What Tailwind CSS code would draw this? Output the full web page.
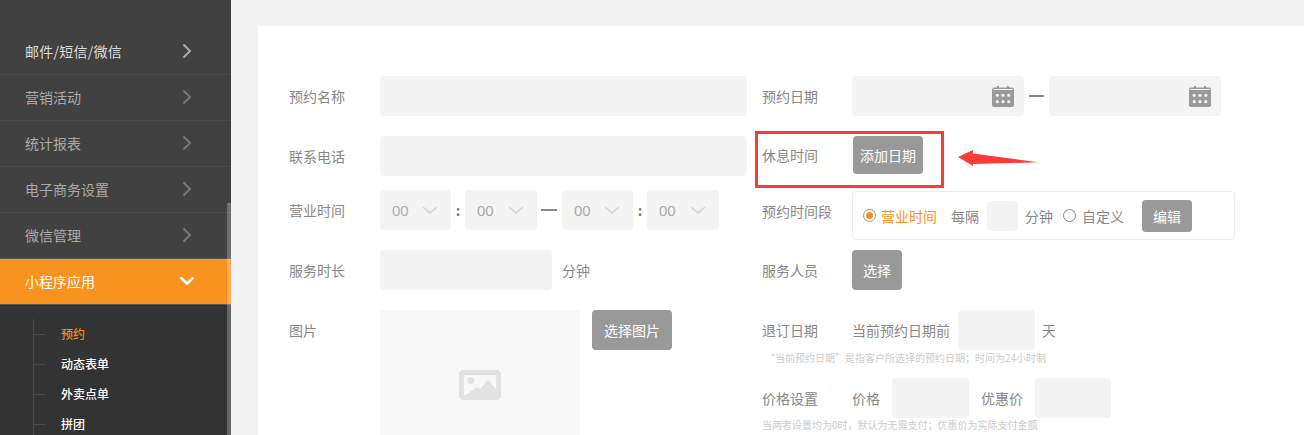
<!DOCTYPE html>
<html lang="en">
<head>
  <meta charset="UTF-8" />
  <title>预约</title>
  <script src="https://cdn.jsdelivr.net/npm/@tailwindcss/browser@4"></script>
</head>
<body class="h-[435px] w-[1304px] overflow-hidden bg-[#f2f2f2] font-['Noto_Sans_CJK_SC','Liberation_Sans',sans-serif] text-sm text-[#888]">
  <div class="relative flex h-[435px] overflow-hidden">

    <!-- sidebar -->
    <aside class="relative h-full w-[231px] shrink-0 overflow-hidden bg-[#414141] pt-[29px]">
      <div class="flex h-[46px] items-center justify-between border-b border-[#4b4b4b] pb-0.5 pl-[25px] pr-[39px] text-[#ddd]">
        <span class="tracking-[0.25px]">邮件/短信/微信</span>
        <svg width="10" height="16" viewBox="0 0 10 16" fill="none" stroke="#aaa" stroke-width="2"><path d="M1.5 1.5 8 8l-6.500 6.500" /></svg>
      </div>
      <div class="flex h-[46px] items-center justify-between border-b border-[#4b4b4b] pb-0.5 pl-[25px] pr-[39px] text-[#aaa]">
        <span>营销活动</span>
        <svg width="10" height="16" viewBox="0 0 10 16" fill="none" stroke="#777" stroke-width="2"><path d="M1.5 1.5 8 8l-6.500 6.500" /></svg>
      </div>
      <div class="flex h-[46px] items-center justify-between border-b border-[#4b4b4b] pb-0.5 pl-[25px] pr-[39px] text-[#aaa]">
        <span>统计报表</span>
        <svg width="10" height="16" viewBox="0 0 10 16" fill="none" stroke="#777" stroke-width="2"><path d="M1.5 1.5 8 8l-6.500 6.500" /></svg>
      </div>
      <div class="flex h-[46px] items-center justify-between border-b border-[#4b4b4b] pb-0.5 pl-[25px] pr-[39px] text-[#aaa]">
        <span>电子商务设置</span>
        <svg width="10" height="16" viewBox="0 0 10 16" fill="none" stroke="#777" stroke-width="2"><path d="M1.5 1.5 8 8l-6.500 6.500" /></svg>
      </div>
      <div class="flex h-[46px] items-center justify-between border-b border-[#555] pb-0.5 pl-[25px] pr-[39px] text-[#aaa]">
        <span>微信管理</span>
        <svg width="10" height="16" viewBox="0 0 10 16" fill="none" stroke="#777" stroke-width="2"><path d="M1.5 1.5 8 8l-6.500 6.500" /></svg>
      </div>
      <div class="flex h-[46px] items-center justify-between border-b border-[#555] bg-[#f9931f] pb-0.5 pl-[25px] pr-[36px] text-white">
        <span>小程序应用</span>
        <svg width="16" height="10" viewBox="0 0 16 10" fill="none" stroke="#fff" stroke-width="2.500"><path d="M1.500 1.500 8 7.500l6.500-6" /></svg>
      </div>
      <div class="relative h-[130px] bg-[#333] pl-[61px] pt-[14px] text-xs font-medium text-white">
        <div class="absolute bottom-0 left-[33px] top-[14px] w-px bg-[#4a4a4a]"></div>
        <div class="relative flex h-[30px] items-center text-[#e88a22]"><i class="absolute left-[-28px] h-px w-3 bg-[#4a4a4a]"></i>预约</div>
        <div class="relative flex h-[30px] items-center"><i class="absolute left-[-28px] h-px w-3 bg-[#4a4a4a]"></i>动态表单</div>
        <div class="relative flex h-[30px] items-center"><i class="absolute left-[-28px] h-px w-3 bg-[#4a4a4a]"></i>外卖点单</div>
        <div class="relative flex h-[30px] items-center"><i class="absolute left-[-28px] h-px w-3 bg-[#4a4a4a]"></i>拼团</div>
      </div>
      <!-- scrollbar -->
      <div class="absolute bottom-0 right-0 top-[203px] w-1 bg-white/25"></div>
    </aside>

    <!-- card -->
    <main class="ml-[27px] mt-[26px] flex flex-1 bg-white pl-[31px] pt-[50px]">

      <!-- left column -->
      <div class="w-[473px] shrink-0">
        <div class="flex h-10 items-center">
          <label class="w-[91px]">预约名称</label>
          <div class="h-10 w-[367px] rounded bg-[#f4f4f4]"></div>
        </div>
        <div class="mt-5 flex h-10 items-center">
          <label class="w-[91px]">联系电话</label>
          <div class="h-10 w-[367px] rounded bg-[#f4f4f4]"></div>
        </div>
        <div class="mt-[14px] flex h-10 items-center">
          <label class="w-[91px]">营业时间</label>
          <div class="flex h-10 w-[71px] items-center rounded bg-[#f4f4f4] pl-3 font-['Liberation_Sans'] text-[15px] text-[#aaa]">
            <span class="w-[30px] pt-px">00</span>
            <svg width="16" height="8" viewBox="0 0 16 8" fill="none" stroke="#d4d4d4" stroke-width="1.500"><path d="M1 1l7 6 7-6" /></svg>
          </div>
          <span class="w-[14px] text-center font-bold text-[#777]">:</span>
          <div class="flex h-10 w-[72px] items-center rounded bg-[#f4f4f4] pl-3 font-['Liberation_Sans'] text-[15px] text-[#aaa]">
            <span class="w-[31px] pt-px">00</span>
            <svg width="16" height="8" viewBox="0 0 16 8" fill="none" stroke="#d4d4d4" stroke-width="1.500"><path d="M1 1l7 6 7-6" /></svg>
          </div>
          <div class="mx-1 h-0.5 w-4 bg-[#888]"></div>
          <div class="ml-px flex h-10 w-[71px] items-center rounded bg-[#f4f4f4] pl-3 font-['Liberation_Sans'] text-[15px] text-[#aaa]">
            <span class="w-[30px] pt-px">00</span>
            <svg width="16" height="8" viewBox="0 0 16 8" fill="none" stroke="#d4d4d4" stroke-width="1.500"><path d="M1 1l7 6 7-6" /></svg>
          </div>
          <span class="w-[14px] text-center font-bold text-[#777]">:</span>
          <div class="flex h-10 w-[72px] items-center rounded bg-[#f4f4f4] pl-3 font-['Liberation_Sans'] text-[15px] text-[#aaa]">
            <span class="w-[31px] pt-px">00</span>
            <svg width="16" height="8" viewBox="0 0 16 8" fill="none" stroke="#d4d4d4" stroke-width="1.500"><path d="M1 1l7 6 7-6" /></svg>
          </div>
        </div>
        <div class="mt-5 flex h-10 items-center">
          <label class="w-[91px]">服务时长</label>
          <div class="h-10 w-[172px] rounded bg-[#f4f4f4]"></div>
          <span class="ml-2.5">分钟</span>
        </div>
        <div class="mt-5 flex items-start">
          <label class="w-[91px] pt-[10px]">图片</label>
          <div class="flex h-[125px] w-[200px] justify-center bg-[#f8f8f8] pt-[60px]">
            <svg width="42" height="30" viewBox="0 0 42 30">
              <rect x="2.500" y="2.500" width="37" height="25" rx="2" fill="none" stroke="#e2e2e2" stroke-width="5" />
              <circle cx="12" cy="10.500" r="3.500" fill="#e2e2e2" />
              <path d="M5 26l13-9 3 2 8-9 8 9v7z" fill="#e2e2e2" />
            </svg>
          </div>
          <button class="ml-3 h-10 w-20 rounded bg-[#999] text-white">选择图片</button>
        </div>
      </div>

      <!-- right column -->
      <div class="flex-1">
        <div class="flex h-10 items-center">
          <label class="w-[90px]">预约日期</label>
          <div class="flex h-10 w-[172px] items-center justify-end rounded bg-[#f4f4f4] pr-[10px]">
            <svg width="22" height="21" viewBox="0 0 22 21">
              <path d="M2 1.500h3V0h2v1.500h8V0h2v1.500h3a2 2 0 0 1 2 2V19a2 2 0 0 1-2 2H2a2 2 0 0 1-2-2V3.500a2 2 0 0 1 2-2z" fill="#999" />
              <rect x="1.500" y="3" width="19" height="1" fill="#f4f4f4" />
              <g fill="#f4f4f4"><circle cx="5.300" cy="9.300" r="1.600" /><circle cx="11" cy="9.300" r="1.600" /><circle cx="16.700" cy="9.300" r="1.600" /><circle cx="5.300" cy="15.700" r="1.600" /><circle cx="11" cy="15.700" r="1.600" /><circle cx="16.700" cy="15.700" r="1.600" /></g>
            </svg>
          </div>
          <div class="mx-[5px] h-0.5 w-[15px] bg-[#888]"></div>
          <div class="flex h-10 w-[172px] items-center justify-end rounded bg-[#f4f4f4] pr-[10px]">
            <svg width="22" height="21" viewBox="0 0 22 21">
              <path d="M2 1.500h3V0h2v1.500h8V0h2v1.500h3a2 2 0 0 1 2 2V19a2 2 0 0 1-2 2H2a2 2 0 0 1-2-2V3.500a2 2 0 0 1 2-2z" fill="#999" />
              <rect x="1.500" y="3" width="19" height="1" fill="#f4f4f4" />
              <g fill="#f4f4f4"><circle cx="5.300" cy="9.300" r="1.600" /><circle cx="11" cy="9.300" r="1.600" /><circle cx="16.700" cy="9.300" r="1.600" /><circle cx="5.300" cy="15.700" r="1.600" /><circle cx="11" cy="15.700" r="1.600" /><circle cx="16.700" cy="15.700" r="1.600" /></g>
            </svg>
          </div>
        </div>
        <div class="mt-5 flex h-[38px] items-center">
          <label class="w-[91px]">休息时间</label>
          <button class="h-[38px] w-[70px] rounded bg-[#999] text-white">添加日期</button>
        </div>
        <div class="mt-[17px] flex items-start">
          <label class="w-[90px] pt-[10px]">预约时间段</label>
          <div class="flex h-[49px] w-[383px] items-center rounded border border-[#eee] pl-[10px]">
            <span class="flex size-[13px] items-center justify-center rounded-full border border-[#999]"><i class="size-[7px] rounded-full bg-[#f9931f]"></i></span>
            <span class="ml-[5px] text-[#f9931f]">营业时间</span>
            <span class="ml-[14px]">每隔</span>
            <div class="ml-2 h-[30px] w-[31px] rounded bg-[#f4f4f4]"></div>
            <span class="ml-[7px]">分钟</span>
            <span class="ml-[10px] size-[13px] rounded-full border border-[#888]"></span>
            <span class="ml-[6px]">自定义</span>
            <button class="ml-[18px] h-8 w-[50px] rounded bg-[#999] text-white">编辑</button>
          </div>
        </div>
        <div class="mt-[10px] flex h-10 items-center">
          <label class="w-[90px]">服务人员</label>
          <button class="h-10 w-[50px] rounded bg-[#999] text-white">选择</button>
        </div>
        <div class="mt-5 flex h-10 items-center">
          <label class="w-[90px]">退订日期</label>
          <span>当前预约日期前</span>
          <div class="ml-2 h-10 w-[77px] rounded bg-[#f4f4f4]"></div>
          <span class="ml-[7px]">天</span>
        </div>
        <p class="mt-[1px] pl-[3px] text-[10px] leading-[14px] text-[#ccc]">“当前预约日期”是指客户所选择的预约日期；时间为24小时制</p>
        <div class="mt-[13px] flex h-10 items-center">
          <label class="w-[90px]">价格设置</label>
          <span>价格</span>
          <div class="ml-3 h-10 w-[77px] rounded bg-[#f4f4f4]"></div>
          <span class="ml-3">优惠价</span>
          <div class="ml-3 h-10 w-[76px] rounded bg-[#f4f4f4]"></div>
        </div>
        <p class="text-[10px] leading-[14px] text-[#ccc]">当两者设置均为0时，默认为无需支付；优惠价为实际支付金额</p>
      </div>
    </main>

    <!-- annotation drawn over the screenshot -->
    <div class="absolute left-[755px] top-[131px] h-[57px] w-[189px] border-[3px] border-[#fb3a3a]"></div>
    <svg class="absolute left-[957px] top-[149px]" width="82" height="18" viewBox="0 0 82 18">
      <path d="M1 8 16 1v3.500l65 8.800-65 1.700v2z" fill="#fb3a3a" />
    </svg>
  </div>
</body>
</html>
